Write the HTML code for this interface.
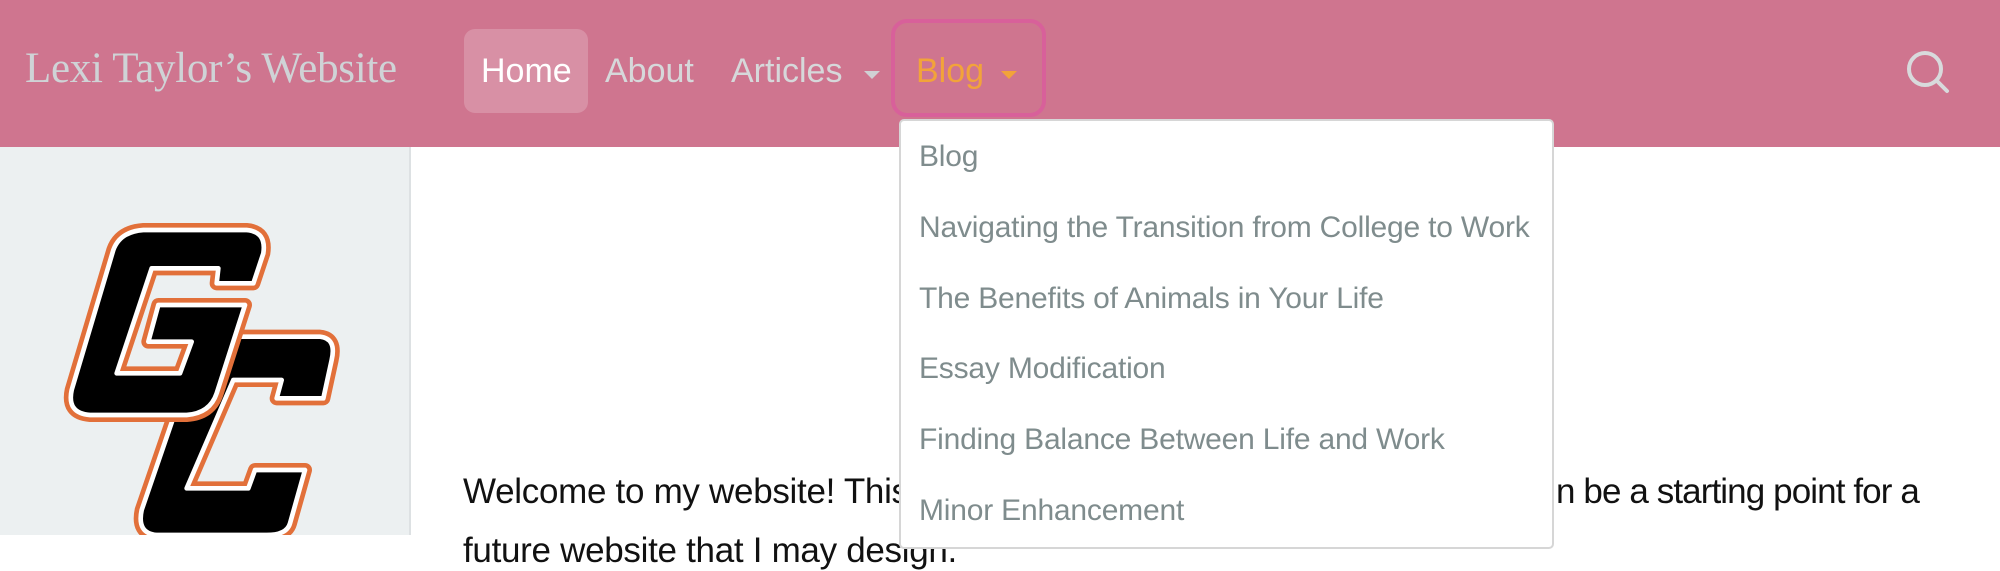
<!DOCTYPE html>
<html><head><meta charset="utf-8"><style>
*{margin:0;padding:0;box-sizing:border-box}
html,body{width:2000px;height:535px;overflow:hidden;background:#fff;font-family:"Liberation Sans",sans-serif}
.hdr{position:absolute;left:0;top:0;width:2000px;height:147px;background:#cf758f}
.brand{position:absolute;left:25px;top:44px;font-family:"Liberation Serif",serif;font-size:43px;color:#cfd3d6;white-space:nowrap;letter-spacing:-0.3px}
.nav{position:absolute;top:52px;font-size:34px;color:#d6d8da;white-space:nowrap}
.pill{position:absolute;left:464px;top:29px;width:124px;height:84px;background:rgba(255,255,255,0.2);border-radius:11px}
.caret{position:absolute;width:0;height:0;border-left:8px solid transparent;border-right:8px solid transparent;border-top:8px solid #d0d0d4}
.blogbox{position:absolute;left:891px;top:19px;width:155px;height:98px;border:4px solid #d8609a;border-radius:16px}
.side{position:absolute;left:0;top:147px;width:411px;height:388px;background:#ecf0f1;border-right:2px solid #dde1e3}
.dd{position:absolute;left:899px;top:119px;width:655px;height:430px;background:#fff;border:2px solid #d6d6d6;border-radius:5px}
.dd div{position:absolute;left:18px;font-size:30px;color:#7f8c8d;white-space:nowrap;letter-spacing:-0.2px}
.txt{position:absolute;font-size:35px;color:#111;white-space:nowrap;letter-spacing:-0.3px}
</style></head><body>
<div class="hdr">
<div class="brand">Lexi Taylor’s Website</div>
<div class="pill"></div>
<div class="nav" style="left:481px;color:#fff">Home</div>
<div class="nav" style="left:605px">About</div>
<div class="nav" style="left:731px">Articles</div>
<div class="caret" style="left:864px;top:71px"></div>
<div class="blogbox"></div>
<div class="nav" style="left:916px;color:#f2a33a">Blog</div>
<div class="caret" style="left:1001px;top:71px;border-top-color:#f2a33a"></div>
<svg style="position:absolute;left:1890px;top:35px" width="80" height="80" viewBox="1890 35 80 80">
<circle cx="1925" cy="69" r="16" fill="none" stroke="#d8dadc" stroke-width="4"/>
<line x1="1937" y1="81" x2="1947" y2="91" stroke="#d8dadc" stroke-width="4" stroke-linecap="round"/>
</svg>
</div>
<div class="side">
<svg style="position:absolute;left:0;top:-7px" width="420" height="395" viewBox="0 0 1260 1185">
<g stroke-linejoin="round">
<path d="M720 590 L960 590 Q1010 595 995 660 L970 775 L830 775 L845 720 L700 720 L560 1045 L745 1045 L765 990 L915 990 L870 1150 Q860 1185 800 1185 L470 1185 Q410 1180 425 1110 L600 600 Q620 590 720 590 Z" fill="none" stroke="#e2703a" stroke-width="42"/>
<path d="M720 590 L960 590 Q1010 595 995 660 L970 775 L830 775 L845 720 L700 720 L560 1045 L745 1045 L765 990 L915 990 L870 1150 Q860 1185 800 1185 L470 1185 Q410 1180 425 1110 L600 600 Q620 590 720 590 Z" fill="#000" stroke="#fff" stroke-width="14"/>
<path d="M430 270 L740 270 Q800 275 790 340 L760 430 L650 430 L655 385 L455 385 L350 700 L540 700 L575 605 L445 605 L475 495 L735 495 L650 760 Q630 820 560 825 L270 825 Q200 820 215 750 L340 330 Q360 275 430 270 Z" fill="none" stroke="#e2703a" stroke-width="42"/>
<path d="M430 270 L740 270 Q800 275 790 340 L760 430 L650 430 L655 385 L455 385 L350 700 L540 700 L575 605 L445 605 L475 495 L735 495 L650 760 Q630 820 560 825 L270 825 Q200 820 215 750 L340 330 Q360 275 430 270 Z" fill="#000" stroke="#fff" stroke-width="14"/>
</g>
</svg>
</div>
<div class="txt" style="left:463px;top:472px">Welcome to my website! This is a space I have created that ca</div>
<div class="txt" style="left:1556px;top:472px;letter-spacing:-0.9px">n be a starting point for a</div>
<div class="txt" style="left:463px;top:531px">future website that I may design.</div>
<div class="dd">
<div style="top:19px">Blog</div>
<div style="top:90px">Navigating the Transition from College to Work</div>
<div style="top:161px">The Benefits of Animals in Your Life</div>
<div style="top:231px">Essay Modification</div>
<div style="top:302px">Finding Balance Between Life and Work</div>
<div style="top:373px">Minor Enhancement</div>
</div>
</body></html>
